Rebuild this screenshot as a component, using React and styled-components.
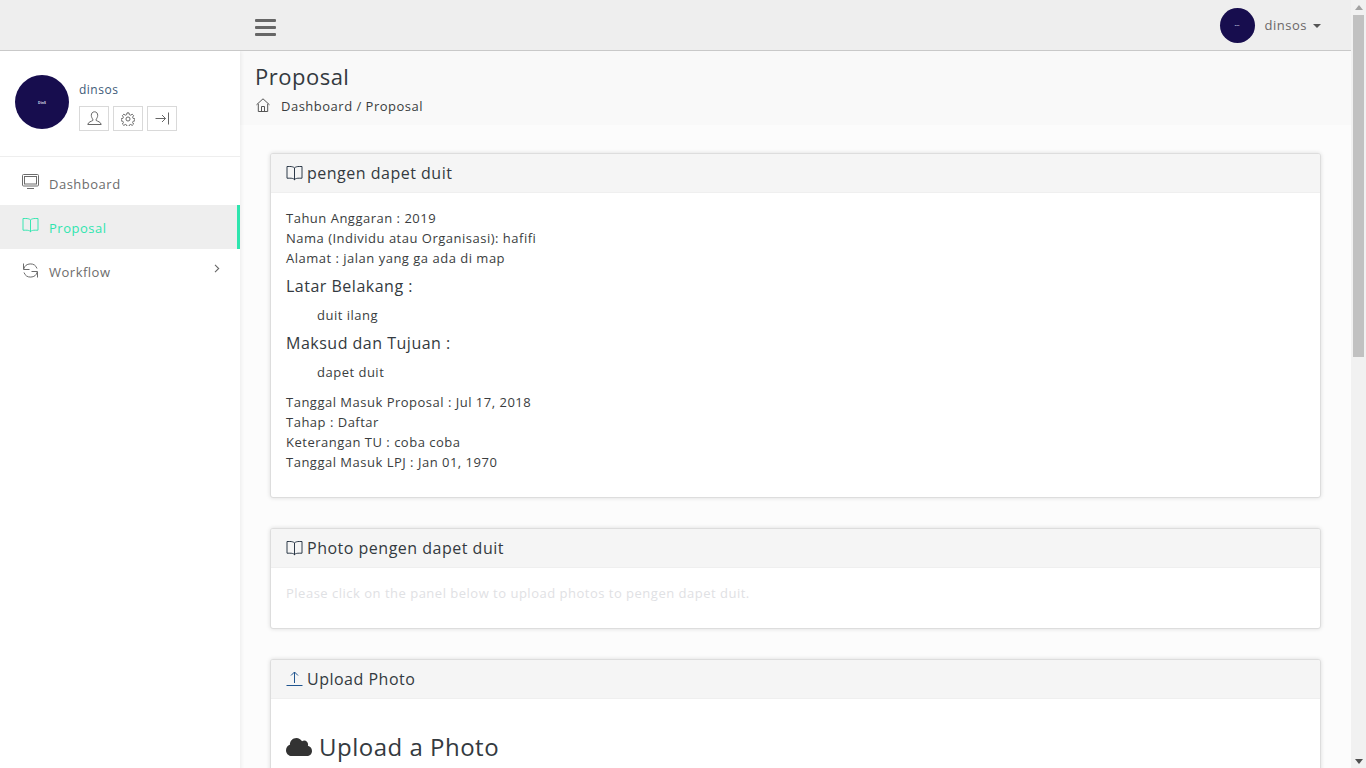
import React from "react";
import styled, { createGlobalStyle } from "styled-components";
import { FaCloud } from "react-icons/fa";

const Global = createGlobalStyle`
  html, body { margin: 0; padding: 0; }
  body {
    background: #fcfcfc;
    font-family: "Open Sans", sans-serif;
    font-size: 13px;
    line-height: 20px;
    letter-spacing: 0.5px;
    color: #3a3d40;
  }
  * { box-sizing: border-box; }
`;

const Page = styled.div`
  display: flex;
  flex-direction: column;
  min-height: 1648px;
  margin-right: 15px;
`;
const ScrollTrack = styled.div`
  position: fixed;
  top: 0;
  right: 0;
  bottom: 0;
  width: 15px;
  z-index: 5;
  background: #f1f1f1;
  display: flex;
  flex-direction: column;
  align-items: center;
  justify-content: space-between;
`;
const ScrollArrow = styled.span`
  flex: none;
  height: 15px;
  display: flex;
  align-items: center;
  justify-content: center;
  &::before {
    content: "";
    border-left: 4px solid transparent;
    border-right: 4px solid transparent;
    border-${p => (p.$down ? "top" : "bottom")}: 5px solid ${p => (p.$down ? "#505050" : "#a3a3a3")};
    margin-top: ${p => (p.$down ? "2px" : "0")};
  }
`;
const ScrollThumb = styled.span`
  width: 11px;
  height: 342px;
  background: #c1c1c1;
  margin-bottom: auto;
`;
const TopBar = styled.header`
  height: 51px;
  flex: none;
  background: #eeeeee;
  border-bottom: 1px solid #c9c9c9;
  display: flex;
  align-items: center;
  justify-content: space-between;
  padding: 0 30px 0 255px;
  position: relative;
  z-index: 2;
`;
const Burger = styled.button`
  width: 21px;
  height: 17px;
  padding: 0;
  border: 0;
  background: transparent;
  display: flex;
  flex-direction: column;
  justify-content: space-between;
  margin-top: 4px;
`;
const BurgerBar = styled.span`
  display: block;
  height: 3px;
  border-radius: 1px;
  background: #666;
`;
const UserMenu = styled.div`
  display: flex;
  align-items: center;
  font-size: 13px;
`;
const Avatar = styled.div`
  width: ${p => p.$size}px;
  height: ${p => p.$size}px;
  flex: none;
  border-radius: 50%;
  background: #170d4e;
  color: #d8d8e8;
  font-size: ${p => p.$font}px;
  font-weight: 700;
  letter-spacing: 0;
  line-height: 1;
  padding-top: 2px;
  display: flex;
  align-items: center;
  justify-content: center;
`;
const UserName = styled.span`
  margin-left: 10px;
  color: #6b6768;
`;
const Caret = styled.span`
  margin-left: 6px;
  width: 0;
  height: 0;
  border-left: 4px solid transparent;
  border-right: 4px solid transparent;
  border-top: 4px solid #555;
  margin-top: 2px;
`;
const Body = styled.div`
  flex: 1;
  display: flex;
`;
const Sidebar = styled.aside`
  width: 240px;
  flex: none;
  background: #fff;
  box-shadow: 1px 0 4px rgba(0, 0, 0, 0.07);
  position: relative;
  z-index: 1;
`;
const Profile = styled.div`
  height: 106px;
  display: flex;
  gap: 10px;
  padding: 24px 15px 0;
  border-bottom: 1px solid #eeeeee;
`;
const ProfileInfo = styled.div`
  display: flex;
  flex-direction: column;
`;
const ProfileName = styled.div`
  color: #3e5a78;
  font-size: 12px;
  line-height: 20px;
  margin-top: 5px;
  letter-spacing: 0.5px;
`;
const ProfileButtons = styled.div`
  display: flex;
  gap: 4px;
  margin-top: 6px;
`;
const SquareButton = styled.button`
  width: 30px;
  height: 25px;
  padding: 0;
  background: #fff;
  border: 1px solid #d9d9d9;
  display: flex;
  align-items: center;
  justify-content: center;
  color: #666666;
`;
const Nav = styled.nav`
  padding-top: 4px;
`;
const NavItem = styled.a`
  height: 44px;
  display: flex;
  align-items: center;
  padding: 2px 17px 0 22px;
  color: ${p => (p.$active ? "#2ee5ae" : "#6c6c6c")};
  background: ${p => (p.$active ? "#eeeeee" : "transparent")};
  border-right: 3px solid ${p => (p.$active ? "#2ee5ae" : "transparent")};
`;
const NavIcon = styled.span`
  width: 18px;
  height: 18px;
  display: flex;
  margin: -2px 9px 0 0;
`;
const NavChevron = styled.span`
  margin-left: auto;
  display: flex;
  margin-top: -8px;
`;
const Main = styled.main`
  flex: 1;
  min-width: 0;
`;
const TitleBand = styled.div`
  height: 74px;
  background: #f9f9f9;
  padding: 11px 15px 0;
`;
const PageTitle = styled.h1`
  margin: 0;
  font-size: 22px;
  line-height: 28px;
  font-weight: 400;
  color: #343a40;
`;
const Breadcrumb = styled.div`
  margin-top: 6px;
  display: flex;
  align-items: center;
  font-size: 13px;
`;
const HomeIcon = styled.span`
  display: flex;
  width: 16px;
  margin: -2px 9px 0 1px;
  color: #555;
`;
const Content = styled.div`
  padding: 28px 30px 30px;
  display: flex;
  flex-direction: column;
  gap: 30px;
`;
const Panel = styled.section`
  background: #fff;
  border: 1px solid #dddddd;
  border-radius: 3px;
  box-shadow: 0 0 4px rgba(0, 0, 0, 0.13);
  overflow: hidden;
`;
const PanelHead = styled.div`
  height: 39px;
  background: #f5f5f5;
  border-bottom: 1px solid #efefef;
  padding: 0 15px;
  display: flex;
  align-items: center;
  font-size: 16px;
  color: #343a40;
`;
const PanelIcon = styled.span`
  display: flex;
  width: 17px;
  margin: 0 4px 0 0;
  color: ${p => p.$color || "#1f2d3d"};
`;
const PanelBody = styled.div`
  padding: 15px;
`;
const Para = styled.p`
  margin: 0 0 10px;
  color: ${p => (p.$muted ? "#dfe1e4" : "inherit")};
`;
const SubHead = styled.h4`
  margin: 7px 0 8px;
  font-size: 16px;
  line-height: 22px;
  font-weight: 400;
  color: #343a40;
`;
const Quote = styled.blockquote`
  margin: 0 0 ${p => p.$gap}px;
  padding-left: 31px;
`;
const UploadHead = styled.h2`
  margin: 18px 0 16px;
  font-size: 24px;
  line-height: 30px;
  font-weight: 400;
  color: #343a40;
  display: flex;
  align-items: center;
  gap: 7px;
`;
const Dropzone = styled.div`
  height: 800px;
  border: 2px dashed #ddd;
  background: #fafafa;
`;

const svg = { fill: "none", stroke: "currentColor", strokeWidth: 1 };

const BookIcon = () => (
  <svg width="17" height="15" viewBox="0 0 17 16" {...svg} style={{ display: "block" }}>
    <path d="M8.500 2C7.500 1 5.500.5 3.500.5H.5v12.500h3c2 0 4 .3 5 1.500 1-1.200 3-1.500 5-1.500h3V.5h-3c-2 0-4 .5-5 1.500z" />
    <path d="M8.500 2v13" />
  </svg>
);
const MonitorIcon = () => (
  <svg width="17" height="16" viewBox="0 0 17 16" {...svg} style={{ display: "block" }}>
    <rect x=".5" y=".5" width="16" height="11.500" rx="1" />
    <rect x="2.500" y="2.500" width="12" height="7.500" />
    <path d="M5 14.500h7" />
  </svg>
);
const SyncIcon = () => (
  <svg width="17" height="17" viewBox="0 0 17 17" {...svg} style={{ display: "block" }}>
    <path d="M1.500 1.500v6h6" />
    <path d="M1.700 7A7 7 0 0 1 15 6.500" />
    <path d="M15.500 15.500v-6h-6" />
    <path d="M15.300 10A7 7 0 0 1 2 10.500" />
  </svg>
);
const UserIcon = () => (
  <svg width="15" height="15" viewBox="0 0 15 15" {...svg}>
    <path d="M7.500 .8c-2 0-3.200 1.500-3.200 3.500 0 1.500.7 3 1.500 3.800v1.400c-1 .7-4.800 1.500-5 4h13.400c-.2-2.500-4-3.300-5-4V8.100c.8-.8 1.500-2.300 1.500-3.800 0-2-1.200-3.500-3.200-3.500z" />
  </svg>
);
const GearIcon = () => (
  <svg width="14" height="14" viewBox="0 0 24 24" fill="none" stroke="currentColor" strokeWidth="1.700">
    <circle cx="12" cy="12" r="3.500" />
    <path d="M10.300 1.500h3.400l.6 3 2.300 1 2.600-1.700 2.400 2.400-1.700 2.600 1 2.300 3 .6v3.400l-3 .6-1 2.300 1.700 2.600-2.400 2.400-2.600-1.700-2.300 1-.6 3h-3.400l-.6-3-2.300-1-2.600 1.700-2.400-2.400 1.700-2.600-1-2.300-3-.6v-3.400l3-.6 1-2.300L2.400 6.200l2.400-2.400 2.600 1.700 2.300-1z" />
  </svg>
);
const ExitIcon = () => (
  <svg width="15" height="13" viewBox="0 0 15 13" {...svg}>
    <path d="M.5 6.500h10M7 3l3.500 3.500L7 10M13.500 .5v12" />
  </svg>
);
const House = () => (
  <svg width="14" height="14" viewBox="0 0 14 14" {...svg} style={{ display: "block" }}>
    <path d="M.5 6.800L7 .8l6.500 6M2.300 5.800v7.700h9.400V5.800M5.500 13.500V8.500h3v5" />
  </svg>
);
const UploadIcon = () => (
  <svg width="17" height="16" viewBox="0 0 17 16" {...svg} style={{ display: "block" }}>
    <path d="M8.500 12V1M5 4.500L8.500 1 12 4.500M.5 14.500h16" />
  </svg>
);
const Chevron = () => (
  <svg width="6" height="9" viewBox="0 0 6 9" fill="none" stroke="#666" strokeWidth="1.100">
    <path d="M1 .8l3.700 3.700L1 8.200" />
  </svg>
);

export default function App() {
  return (
    <>
      <Global />
      <ScrollTrack aria-hidden="true">
        <ScrollArrow />
        <ScrollThumb />
        <ScrollArrow $down />
      </ScrollTrack>
      <Page>
        <TopBar>
          <Burger aria-label="menu">
            <BurgerBar />
            <BurgerBar />
            <BurgerBar />
          </Burger>
          <UserMenu>
            <Avatar $size={35} $font={2}>DinS</Avatar>
            <UserName>dinsos</UserName>
            <Caret />
          </UserMenu>
        </TopBar>
        <Body>
          <Sidebar>
            <Profile>
              <Avatar $size={54} $font={3.500}>DinS</Avatar>
              <ProfileInfo>
                <ProfileName>dinsos</ProfileName>
                <ProfileButtons>
                  <SquareButton><UserIcon /></SquareButton>
                  <SquareButton><GearIcon /></SquareButton>
                  <SquareButton><ExitIcon /></SquareButton>
                </ProfileButtons>
              </ProfileInfo>
            </Profile>
            <Nav>
              <NavItem><NavIcon><MonitorIcon /></NavIcon>Dashboard</NavItem>
              <NavItem $active><NavIcon><BookIcon /></NavIcon>Proposal</NavItem>
              <NavItem>
                <NavIcon><SyncIcon /></NavIcon>Workflow
                <NavChevron><Chevron /></NavChevron>
              </NavItem>
            </Nav>
          </Sidebar>
          <Main>
            <TitleBand>
              <PageTitle>Proposal</PageTitle>
              <Breadcrumb>
                <HomeIcon><House /></HomeIcon>
                Dashboard / Proposal
              </Breadcrumb>
            </TitleBand>
            <Content>
              <Panel>
                <PanelHead><PanelIcon><BookIcon /></PanelIcon>pengen dapet duit</PanelHead>
                <PanelBody>
                  <div>Tahun Anggaran : 2019</div>
                  <div>Nama (Individu atau Organisasi): hafifi</div>
                  <div>Alamat : jalan yang ga ada di map</div>
                  <SubHead>Latar Belakang :</SubHead>
                  <Quote $gap={7}>duit ilang</Quote>
                  <SubHead>Maksud dan Tujuan :</SubHead>
                  <Quote $gap={10}>dapet duit</Quote>
                  <Para>
                    Tanggal Masuk Proposal : Jul 17, 2018<br />
                    Tahap : Daftar<br />
                    Keterangan TU : coba coba<br />
                    Tanggal Masuk LPJ : Jan 01, 1970
                  </Para>
                </PanelBody>
              </Panel>
              <Panel>
                <PanelHead><PanelIcon><BookIcon /></PanelIcon>Photo pengen dapet duit</PanelHead>
                <PanelBody>
                  <Para $muted>Please click on the panel below to upload photos to pengen dapet duit.</Para>
                </PanelBody>
              </Panel>
              <Panel>
                <PanelHead><PanelIcon $color="#20558f"><UploadIcon /></PanelIcon>Upload Photo</PanelHead>
                <PanelBody>
                  <UploadHead><FaCloud size={26} color="#333333" />Upload a Photo</UploadHead>
                  <Dropzone />
                </PanelBody>
              </Panel>
            </Content>
          </Main>
        </Body>
      </Page>
    </>
  );
}
